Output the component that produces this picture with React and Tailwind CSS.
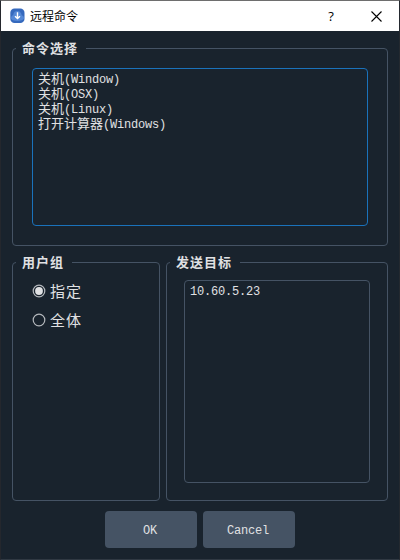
import React from "react";

const commands = [
  ["关机", "(Window)"],
  ["关机", "(OSX)"],
  ["关机", "(Linux)"],
  ["打开计算器", "(Windows)"],
];

const mono = "font-['Liberation_Mono','Noto_Sans_CJK_SC',monospace] text-[12px] tracking-[-0.2px]";

function Group({ title, className, children }) {
  return (
    <fieldset className={`min-w-0 rounded-[4px] border border-[#455364] ${className}`}>
      <legend className="ml-[3px] h-4 pl-[6px] pr-[8px] text-[13px] font-bold leading-[16px] tracking-[1px] whitespace-nowrap">
        {title}
      </legend>
      {children}
    </fieldset>
  );
}

function Radio({ label, checked }) {
  return (
    <div className="flex h-[18px] items-center text-[15px] leading-[18px] tracking-[1px]">
      <svg width="14" height="14" viewBox="0 0 14 14" className="mr-1 shrink-0">
        <circle cx="7" cy="7" r="5.8" fill="none" stroke="#b4b8bc" strokeWidth="1.2" />
        {checked && <circle cx="7" cy="7" r="3.9" fill="#e0e1e3" />}
      </svg>
      <span>{label}</span>
    </div>
  );
}

function AppIcon() {
  return (
    <svg width="15" height="16" viewBox="0 0 15 16">
      <rect x="0.3" y="0.5" width="14.2" height="14.6" rx="4.2" fill="#3569bd" />
      <path d="M1 10.5c0-2 1-3 2.2-3.2C3.5 4.5 5 3 7.4 3s4 1.7 4.3 4.2c1.5.3 2.3 1.5 2.3 3.3-.8 1.5-3 2.5-6.6 2.5S1.8 12 1 10.5z" fill="#5488d6" />
      <path d="M7.5 4.3v6M5 8.2l2.5 2.3L10 8.200" fill="none" stroke="#fff" strokeWidth="1.4" />
    </svg>
  );
}

export default function App() {
  return (
    <div className="flex h-[560px] w-[400px] flex-col border border-t-[#6e6e6e] border-r-[#24292f] border-b-[#303943] border-l-[#24272d] bg-[#19232d] font-['Noto_Sans_CJK_SC',sans-serif] text-[#e0e1e3]">
      <header className="flex h-[30px] shrink-0 items-center bg-white pl-[9px] text-black">
        <AppIcon />
        <span className="ml-[5px] text-[12px] leading-[16px]">远程命令</span>
        <span className="ml-auto w-[10px] text-center font-['Open_Sans',sans-serif] text-[13px] font-medium leading-[16px]">?</span>
        <svg width="11" height="11" viewBox="0 0 11 11" className="ml-[35px] mr-[17px]">
          <path d="M.5.5l10 10M10.5.5l-10 10" stroke="#000" strokeWidth="1.1" />
        </svg>
      </header>

      <main className="flex flex-col px-[11px] pt-[9px]">
        <Group title="命令选择" className="h-[206px]">
          <ul className="mx-[19px] mt-3 h-[158px] rounded-[4px] border border-[#1a72bb] pl-[5px] pt-[3px]">
            {commands.map(([name, os]) => (
              <li key={name + os} className="flex h-[15px] items-baseline leading-[15px]">
                <span className="font-['Liberation_Mono','Noto_Sans_CJK_SC',monospace] text-[13px]">{name}</span>
                <span className={mono}>{os}</span>
              </li>
            ))}
          </ul>
        </Group>

        <div className="mt-2 flex gap-[6px]">
          <Group title="用户组" className="h-[247px] w-[148px]">
            <div className="flex flex-col gap-[11px] pl-[19px] pt-[12px]">
              <Radio label="指定" checked />
              <Radio label="全体" />
            </div>
          </Group>
          <Group title="发送目标" className="h-[247px] flex-1">
            <div className="ml-[17px] mr-[17px] mt-[10px] h-[203px] rounded-[4px] border border-[#455364] pl-[5px] pt-[4px]">
              <div className={`leading-[15px] ${mono}`}>10.60.5.23</div>
            </div>
          </Group>
        </div>

        <div className="mt-[10px] flex justify-center gap-[6px]">
          <button className={`h-[37px] w-[92px] rounded-[4px] bg-[#455364] pr-[2px] pt-[2px] ${mono}`}>OK</button>
          <button className={`h-[37px] w-[92px] rounded-[4px] bg-[#455364] pr-[2px] pt-[2px] ${mono}`}>Cancel</button>
        </div>
      </main>
    </div>
  );
}
